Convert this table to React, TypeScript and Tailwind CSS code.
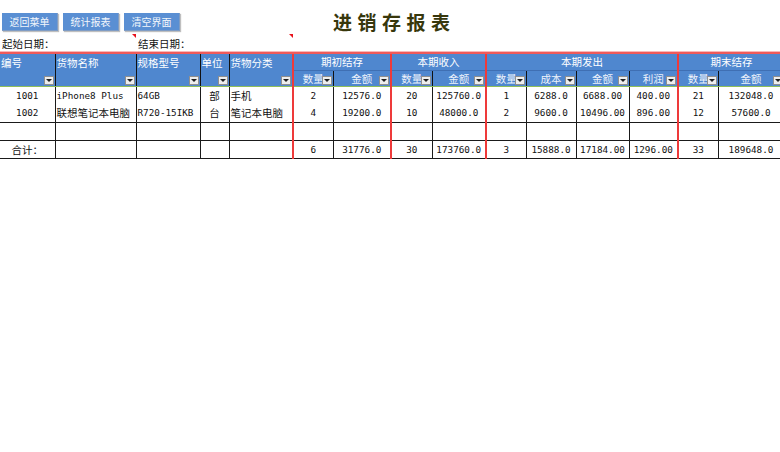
import React from "react";

const W = [55, 81, 64, 29, 64, 40, 58, 41, 54, 40, 50, 53, 49, 40, 66];

const CJK = "font-['Noto_Sans_CJK_SC',sans-serif] text-[10.5px]";
const MONO = "font-['DejaVu_Sans_Mono','Noto_Sans_CJK_SC',monospace] text-[9.3px]";

function Drop() {
  return (
    <span className="absolute right-[1px] bottom-[1px] w-[10px] h-[9px] bg-[#eeeeee] border border-[#8f8f8f] flex items-center justify-center">
      <span className="block w-0 h-0 border-l-[3px] border-r-[3px] border-t-[3px] border-l-transparent border-r-transparent border-t-[#1f1f1f]" />
    </span>
  );
}

const rows: string[][] = [
  ["1001", "iPhone8 Plus", "64GB", "部", "手机", "2", "12576.0", "20", "125760.0", "1", "6288.0", "6688.00", "400.00", "21", "132048.0"],
  ["1002", "联想笔记本电脑", "R720-15IKB", "台", "笔记本电脑", "4", "19200.0", "10", "48000.0", "2", "9600.0", "10496.00", "896.00", "12", "57600.0"],
  ["", "", "", "", "", "", "", "", "", "", "", "", "", "", ""],
  ["合计：", "", "", "", "", "6", "31776.0", "30", "173760.0", "3", "15888.0", "17184.00", "1296.00", "33", "189648.0"],
];

const isCjk = (s: string) => /[\u4e00-\u9fff\uff1a]/.test(s);
const isRed = (i: number) => i === 5 || i === 7 || i === 9 || i === 13;
const isLeft = (i: number) => i === 1 || i === 2 || i === 4;

function LeftHead({ label }: { label: string }) {
  return (
    <th
      rowSpan={2}
      className="relative p-0 pl-[1px] align-top text-left font-normal text-white bg-[#4f87cf] border-r border-r-[#111] border-b border-b-[#8fbf5a]"
    >
      <div className={`${CJK} leading-[16px] pt-[1px] whitespace-nowrap`}>{label}</div>
      <Drop />
    </th>
  );
}

function GroupHead({ label, span }: { label: string; span: number }) {
  return (
    <th
      colSpan={span}
      className={`p-0 h-[16px] font-normal text-white bg-[#4f87cf] border-l-2 border-l-[#ee3a3a] border-b border-b-[#3f6fb3] ${CJK} leading-[15px] text-center whitespace-nowrap`}
    >
      {label}
    </th>
  );
}

function SubHead({ label, red }: { label: string; red?: boolean }) {
  return (
    <th
      className={`relative p-0 h-[16px] font-normal text-[#eef3fb] bg-[#4f87cf] border-r border-r-[#111] border-b border-b-[#8fbf5a] ${
        red ? "border-l-2 border-l-[#ee3a3a]" : ""
      } ${CJK} leading-[15px] text-center whitespace-nowrap`}
    >
      {label}
      <Drop />
    </th>
  );
}

export default function App() {
  return (
    <div className="w-[780px] h-[452px] bg-white overflow-hidden relative">
      {/* Top bar */}
      <div className="flex items-center pt-[13px] pl-[2px] h-[31px]">
        {["返回菜单", "统计报表", "清空界面"].map((t) => (
          <div
            key={t}
            className={`w-[56px] h-[18px] mr-[5px] bg-[#5a8fd3] text-[#f4f7fc] flex items-center justify-center border-r border-b border-r-[#7f9cc4] border-b-[#7f9cc4] shadow-[1px_1px_1px_rgba(0,0,0,0.25)] ${CJK} text-[10px]`}
          >
            {t}
          </div>
        ))}
        <div className="ml-[148px] font-['Noto_Sans_CJK_SC',sans-serif] font-bold text-[19px] leading-none tracking-[5.5px] text-[#37370c] -mt-[1px]">
          进销存报表
        </div>
      </div>

      {/* Date row */}
      <div className="flex mt-[3px] h-[17px]">
        <div className="relative w-[136px] pl-[2px] flex items-center">
          <span className={`${CJK} text-[#111] leading-none pt-[3px]`}>起始日期：</span>
          <span className="absolute top-0 right-0 w-0 h-0 border-t-[4px] border-l-[4px] border-t-[#e8121c] border-l-transparent" />
        </div>
        <div className="relative w-[157px] pl-[2px] flex items-center">
          <span className={`${CJK} text-[#111] leading-none pt-[3px]`}>结束日期：</span>
          <span className="absolute top-0 right-0 w-0 h-0 border-t-[4px] border-l-[4px] border-t-[#e8121c] border-l-transparent" />
        </div>
      </div>

      <div className="h-[1px] bg-[#f9b9b9]" />
      <div className="h-[2px] bg-[#ef5a5a]" />

      <table className="table-fixed border-collapse w-[784px]">
        <colgroup>
          {W.map((w, i) => (
            <col key={i} style={{ width: w }} />
          ))}
        </colgroup>
        <thead>
          <tr>
            <LeftHead label="编号" />
            <LeftHead label="货物名称" />
            <LeftHead label="规格型号" />
            <LeftHead label="单位" />
            <LeftHead label="货物分类" />
            <GroupHead label="期初结存" span={2} />
            <GroupHead label="本期收入" span={2} />
            <GroupHead label="本期发出" span={4} />
            <GroupHead label="期末结存" span={2} />
          </tr>
          <tr>
            <SubHead label="数量" red />
            <SubHead label="金额" />
            <SubHead label="数量" red />
            <SubHead label="金额" />
            <SubHead label="数量" red />
            <SubHead label="成本" />
            <SubHead label="金额" />
            <SubHead label="利润" />
            <SubHead label="数量" red />
            <SubHead label="金额" />
          </tr>
        </thead>
        <tbody>
          {rows.map((r, ri) => (
            <tr key={ri}>
              {r.map((c, ci) => (
                <td
                  key={ci}
                  className={`p-0 h-[18px] whitespace-nowrap overflow-hidden text-[#111] border-r border-r-[#1a1a1a] ${
                    ri === 0 ? "" : "border-b border-b-[#1a1a1a]"
                  } ${isRed(ci) ? "border-l-2 border-l-[#ee3a3a]" : ""} ${
                    isLeft(ci) ? "text-left pl-[1px]" : "text-center"
                  } ${isCjk(c) ? CJK : MONO} leading-[17px]`}
                >
                  {c}
                </td>
              ))}
            </tr>
          ))}
        </tbody>
      </table>
    </div>
  );
}
